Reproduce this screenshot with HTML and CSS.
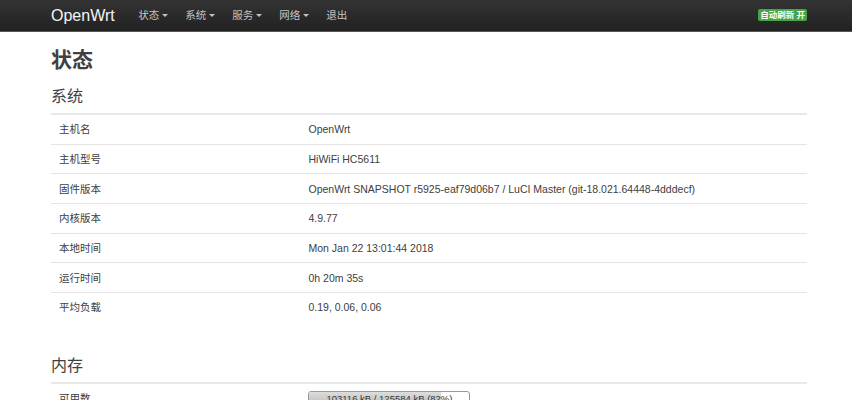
FILE: index.html
```html
<!DOCTYPE html>
<html lang="zh-cn">
<head>
  <meta charset="UTF-8" />
  <title>OpenWrt - 状态 - LuCI</title>
  <link rel="stylesheet" href="styles.css">
</head>
<body>
<div class="navbar">
  <div class="container nav-inner">
    <a class="brand" href="#">OpenWrt</a>
    <ul class="nav">
      <li><a href="#">状态 <span class="caret"></span></a></li>
      <li><a href="#">系统 <span class="caret"></span></a></li>
      <li><a href="#">服务 <span class="caret"></span></a></li>
      <li><a href="#">网络 <span class="caret"></span></a></li>
      <li><a href="#">退出</a></li>
    </ul>
    <span class="label-success">自动刷新 开</span>
  </div>
</div>

<div class="container main">
  <h2>状态</h2>

  <h3>系统</h3>
  <table class="table">
    <tr><td class="key">主机名</td><td>OpenWrt</td></tr>
    <tr><td class="key">主机型号</td><td>HiWiFi HC5611</td></tr>
    <tr><td class="key">固件版本</td><td>OpenWrt SNAPSHOT r5925-eaf79d06b7 / LuCI Master (git-18.021.64448-4dddecf)</td></tr>
    <tr><td class="key">内核版本</td><td>4.9.77</td></tr>
    <tr><td class="key">本地时间</td><td>Mon Jan 22 13:01:44 2018</td></tr>
    <tr><td class="key">运行时间</td><td>0h 20m 35s</td></tr>
    <tr><td class="key">平均负载</td><td>0.19, 0.06, 0.06</td></tr>
  </table>

  <h3 class="section">内存</h3>
  <table class="table">
    <tr>
      <td class="key">可用数</td>
      <td>
        <div class="progress">
          <div class="bar" style="width: 82%"></div>
          <span class="progress-text">103116 kB / 125584 kB (82%)</span>
        </div>
      </td>
    </tr>
  </table>
</div>
</body>
</html>
```

FILE: styles.css
```css
body {
  margin: 0;
  padding: 0;
  background-color: #fff;
  color: #404040;
  font-family: "Liberation Sans", "Noto Sans CJK SC", sans-serif;
  font-size: 10.5px;
  line-height: 15px;
}
.container {
  width: 756px;
  margin-left: 51px;
}
.navbar {
  height: 32px;
  background: linear-gradient(#333, #222);
  border-bottom: 1px solid #555;
  box-sizing: border-box;
}
.nav-inner {
  display: flex;
  align-items: center;
  height: 31px;
}
.brand {
  color: #f5f5f5;
  font-size: 16px;
  text-decoration: none;
  margin-right: 15px;
}
.nav {
  display: flex;
  list-style: none;
  margin: 0;
  padding: 0;
  flex: 1;
}
.nav a {
  display: flex;
  align-items: center;
  color: #c4c4c4;
  text-decoration: none;
  font-size: 10.5px;
  padding: 0 8.5px;
}
.caret {
  display: inline-block;
  width: 0;
  height: 0;
  margin-left: 3px;
  border-left: 3px solid transparent;
  border-right: 3px solid transparent;
  border-top: 3px solid #c4c4c4;
}
.label-success {
  background-color: #46a546;
  color: #fff;
  font-size: 8.5px;
  font-weight: bold;
  line-height: 12px;
  padding: 0 2px;
  border-radius: 2px;
  margin-top: -2px;
}
.main h2 {
  font-size: 21px;
  line-height: 24px;
  font-weight: bold;
  margin: 16px 0 0;
}
.main h3 {
  font-size: 16px;
  font-weight: normal;
  line-height: 20px;
  margin: 15px 0 6px;
}
.main h3.section {
  margin-top: 34px;
}
.table {
  width: 100%;
  border-collapse: collapse;
  border-spacing: 0;
}
.table td {
  border-top: 1px solid #e4e4e4;
  padding: 7px 8px;
  height: 14.67px;
  line-height: 14px;
  text-align: left;
  vertical-align: middle;
}
.table tr:first-child td {
  border-top: 2px solid #e8e8e8;
}
.table td.key {
  width: 33%;
}
.progress {
  position: relative;
  width: 160px;
  height: 13px;
  border: 1px solid #999;
  border-radius: 3px;
  background-color: #fff;
  overflow: hidden;
}
.bar {
  height: 100%;
  background: linear-gradient(#ddd, #bbb);
}
.progress-text {
  position: absolute;
  top: 0;
  left: 0;
  right: 0;
  text-align: center;
  font-size: 9.5px;
  line-height: 13px;
  color: #333;
}
```
